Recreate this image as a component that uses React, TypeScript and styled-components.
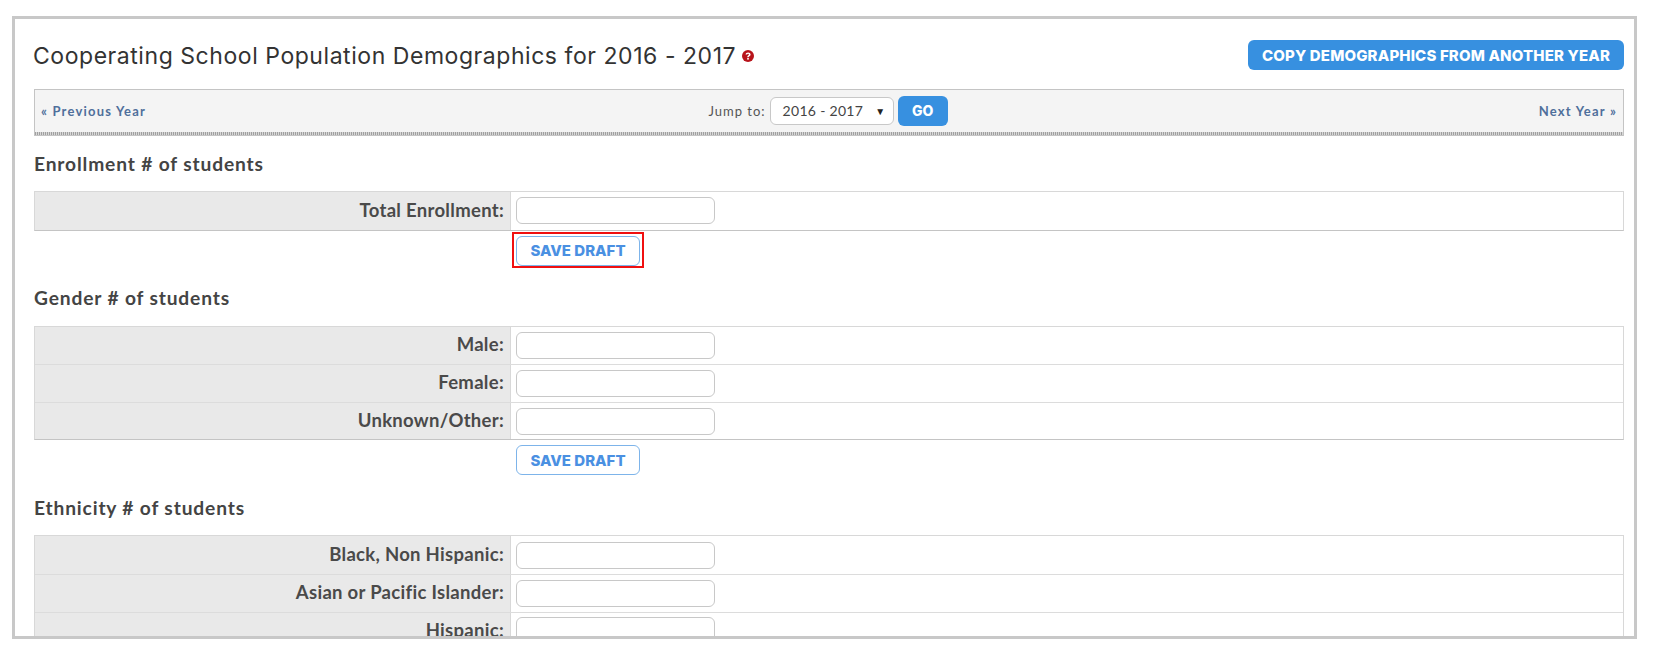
import { createGlobalStyle } from 'styled-components';
import styled from 'styled-components';

const GlobalStyle = createGlobalStyle`
  html, body {
    margin: 0;
    background: #fff;
  }
  body {
    font-family: 'Lato', 'Liberation Sans', sans-serif;
    color: #444;
  }
`;

const sections = [
  { title: 'Enrollment # of students', rows: ['Total Enrollment:'], highlight: true, save: true },
  { title: 'Gender # of students', rows: ['Male:', 'Female:', 'Unknown/Other:'], highlight: false, save: true },
  {
    title: 'Ethnicity # of students',
    rows: ['Black, Non Hispanic:', 'Asian or Pacific Islander:', 'Hispanic:'],
    highlight: false,
    save: false,
  },
];

const App = () => {
  return (
    <Page>
      <GlobalStyle />
      <Frame>
        <Header>
          <Title>
            Cooperating School Population Demographics for 2016 - 2017
            <HelpIcon viewBox="0 0 12 12">
              <circle cx="6" cy="6" r="6" fill="#b8141b" />
              <path
                d="M3.6 4.6c0-1.5 1.1-2.2 2.5-2.2s2.5.8 2.5 2c0 1-.6 1.4-1.2 1.8-.5.3-.7.6-.7 1.1H5.2c0-.9.3-1.4.9-1.8.5-.3.8-.6.8-1s-.3-.7-.8-.7c-.6 0-.9.3-.9.8H3.6z"
                fill="#fff"
              />
              <rect x="5.2" y="8" width="1.6" height="1.6" fill="#fff" />
            </HelpIcon>
          </Title>
          <CopyButton>Copy Demographics From Another Year</CopyButton>
        </Header>
        <YearBar>
          <YearLink>« Previous Year</YearLink>
          <JumpGroup>
            <JumpLabel>Jump to:</JumpLabel>
            <YearSelect>
              2016 - 2017
              <Caret>▼</Caret>
            </YearSelect>
            <GoButton>Go</GoButton>
          </JumpGroup>
          <YearLink>Next Year »</YearLink>
        </YearBar>
        {sections.map((section) => (
          <Section key={section.title}>
            <SectionTitle>{section.title}</SectionTitle>
            <FormTable>
              {section.rows.map((row) => (
                <FormRow key={row}>
                  <RowLabel>{row}</RowLabel>
                  <RowField>
                    <TextInput type="text" />
                  </RowField>
                </FormRow>
              ))}
            </FormTable>
            {section.save && (
              <SaveRow>
                <SaveMark $highlight={section.highlight}>
                  <SaveButton>Save Draft</SaveButton>
                </SaveMark>
              </SaveRow>
            )}
          </Section>
        ))}
      </Frame>
    </Page>
  );
};

export default App;

const Page = styled.div`
  padding: 16px 19px 15px 12px;
  height: 654px;
  box-sizing: border-box;
`;

const Frame = styled.div`
  height: 623px;
  box-sizing: border-box;
  border: 3px solid #c8c8c8;
  padding: 20px 10px 0 19px;
  overflow: hidden;
`;

const Header = styled.div`
  display: flex;
  justify-content: space-between;
  align-items: center;
  height: 31px;
`;

const Title = styled.h1`
  margin: 2px 0 0 -1px;
  font-family: 'Inter', 'Liberation Sans', sans-serif;
  font-size: 23px;
  font-weight: 400;
  letter-spacing: 0.55px;
  color: #333;
  display: flex;
  align-items: center;
  gap: 6px;
`;

const HelpIcon = styled.svg`
  width: 12px;
  height: 12px;
  margin-top: 1px;
`;

const CopyButton = styled.button`
  height: 30px;
  width: 376px;
  padding: 1px 0 0;
  border: 0;
  border-radius: 6px;
  background: #3790e0;
  color: #fff;
  font-family: 'Inter', 'Liberation Sans', sans-serif;
  font-size: 15px;
  font-weight: 800;
  letter-spacing: 0.15px;
  text-transform: uppercase;
`;

const YearBar = styled.div`
  margin-top: 19px;
  height: 47px;
  box-sizing: border-box;
  border: 1px solid #c4c4c4;
  background:
    repeating-linear-gradient(90deg, #a0a0a0 0 1px, #d8d8d8 1px 2px) bottom / 100% 3px no-repeat,
    #f4f4f4;
  padding: 0 6px 4px;
  display: grid;
  grid-template-columns: 1fr auto 1fr;
  align-items: center;
`;

const YearLink = styled.a`
  font-size: 13px;
  font-weight: 700;
  letter-spacing: 1.2px;
  color: #4f6f9b;

  &:last-child {
    text-align: right;
  }
`;

const JumpGroup = styled.div`
  display: flex;
  align-items: center;
  gap: 4px;
  margin-right: 2px;
`;

const JumpLabel = styled.span`
  font-size: 13px;
  letter-spacing: 1px;
  color: #555;
`;

const YearSelect = styled.div`
  width: 124px;
  height: 28px;
  box-sizing: border-box;
  border: 1px solid #c8c8c8;
  border-radius: 6px;
  background: #fff;
  padding: 0 7px 0 12px;
  display: flex;
  align-items: center;
  justify-content: space-between;
  font-size: 14px;
  letter-spacing: 0.3px;
  color: #444;
`;

const Caret = styled.span`
  font-size: 10px;
  color: #222;
`;

const GoButton = styled.button`
  width: 50px;
  height: 30px;
  padding: 0;
  border: 0;
  border-radius: 6px;
  background: #3790e0;
  color: #fff;
  font-family: 'Inter', 'Liberation Sans', sans-serif;
  font-size: 14px;
  font-weight: 800;
  text-transform: uppercase;
`;

const Section = styled.section`
  margin-top: 16.5px;

  & + & {
    margin-top: 19.5px;
  }
`;

const SectionTitle = styled.h2`
  margin: 0 0 17.5px;
  font-size: 19.2px;
  line-height: 21px;
  font-weight: 700;
  letter-spacing: 0.85px;
  color: #444;
`;

const FormTable = styled.div`
  border: 1px solid #d8d8d8;
  border-bottom-color: #c4c4c4;
`;

const FormRow = styled.div`
  display: grid;
  grid-template-columns: 476px 1fr;
  height: 37.6px;
  box-sizing: border-box;

  & + & {
    border-top: 1px solid #dcdcdc;
  }
`;

const RowLabel = styled.div`
  background: #e9e9e9;
  border-right: 1px solid #d8d8d8;
  padding: 0 6px 2px 0;
  display: flex;
  align-items: center;
  justify-content: flex-end;
  font-size: 18.5px;
  font-weight: 700;
  letter-spacing: 0.3px;
  color: #4a4a4a;
`;

const RowField = styled.div`
  display: flex;
  align-items: center;
  padding-left: 5px;
`;

const TextInput = styled.input`
  width: 199px;
  height: 27px;
  box-sizing: border-box;
  border: 1px solid #c8c8c8;
  border-radius: 6px;
  background: #fff;
`;

const SaveRow = styled.div`
  padding: 1px 0 0 478px;
`;

const SaveMark = styled.div<{ $highlight: boolean }>`
  display: flex;
  width: fit-content;
  padding: 2px 2px 0;
  border: 2px solid ${({ $highlight }) => ($highlight ? '#f01010' : 'transparent')};
`;

const SaveButton = styled.button`
  width: 124px;
  height: 30px;
  padding: 0;
  border: 1px solid #7db4ea;
  border-radius: 6px;
  background: #fff;
  color: #4a90e2;
  font-family: 'Inter', 'Liberation Sans', sans-serif;
  font-size: 15px;
  font-weight: 800;
  text-transform: uppercase;
`;
